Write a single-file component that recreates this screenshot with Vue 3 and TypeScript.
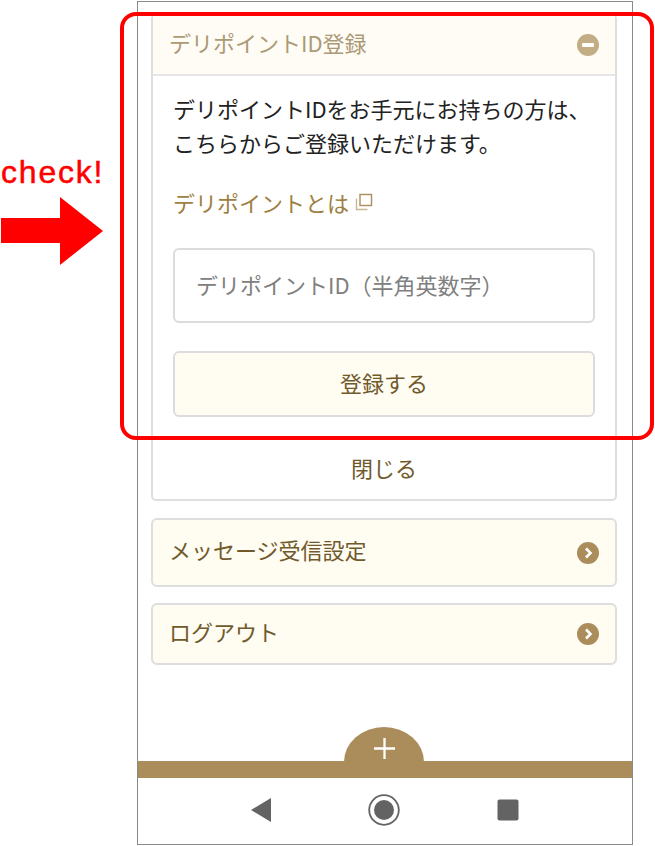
<script setup lang="ts">
const menuRows = ['メッセージ受信設定', 'ログアウト']
</script>

<template>
  <div class="page">
    <div class="phone">
      <main class="content">
        <section class="panel">
          <header class="panel-head">
            <span class="label">デリポイントID登録</span>
            <svg class="round-icon" viewBox="0 0 22 22">
              <circle cx="11" cy="11" r="11" fill="#c2ad84" />
              <rect x="5" y="9" width="12" height="4" rx="1" fill="#fff" />
            </svg>
          </header>
          <div class="panel-body">
            <p class="lead">デリポイントIDをお手元にお持ちの方は、<br />こちらからご登録いただけます。</p>
            <a class="link">
              デリポイントとは
              <svg class="window-icon" viewBox="0 0 18 18" fill="none" stroke="#a98d5c" stroke-width="1.4">
                <rect x="5" y="1.5" width="11.5" height="11" />
                <path d="M1.5 5.5v11h11" stroke="#c9b696" />
              </svg>
            </a>
            <input class="id-input" type="text" placeholder="デリポイントID（半角英数字）" />
            <button class="submit" type="button">登録する</button>
          </div>
          <div class="close">閉じる</div>
        </section>

        <a v-for="row in menuRows" :key="row" class="menu-row">
          <span class="label">{{ row }}</span>
          <svg class="round-icon" viewBox="0 0 22 22">
            <circle cx="11" cy="11" r="11" fill="#ab8d5b" />
            <path d="M9 6.5l4.5 4.5L9 15.5" fill="none" stroke="#fff" stroke-width="2.6" />
          </svg>
        </a>
      </main>

      <div class="tab-bar">
        <div class="tab-dome">
          <svg class="plus" viewBox="0 0 22 22" stroke="#fff" stroke-width="2.4">
            <path d="M11 0v22M0 11h22" />
          </svg>
        </div>
      </div>

      <nav class="system-nav">
        <svg class="nav-icon back" viewBox="0 0 20 24">
          <path d="M0 12L20 0v24z" fill="#636363" />
        </svg>
        <svg class="nav-icon home" viewBox="0 0 32 32">
          <circle cx="16" cy="16" r="14.8" fill="#fff" stroke="#636363" stroke-width="1.8" />
          <circle cx="16" cy="16" r="10" fill="#636363" />
        </svg>
        <svg class="nav-icon recent" viewBox="0 0 22 22">
          <rect x="0.5" y="0.5" width="21" height="21" rx="2" fill="#636363" />
        </svg>
      </nav>
    </div>

    <!-- annotation on top of the screenshot -->
    <div class="check-label">check!</div>
    <svg class="check-arrow" viewBox="0 0 103 70">
      <path d="M1 22h59V1l43 34-43 34V47H1z" fill="#f00" />
    </svg>
    <div class="check-frame"></div>
  </div>
</template>

<style>
body {
  background: #fff;
}
</style>

<style scoped>
.page {
  position: relative;
  width: 655px;
  height: 846px;
  overflow: hidden;
  font-family: "Noto Sans CJK JP", "Noto Sans", sans-serif;
  font-size: 22px;
  background: #fff;
}
.phone {
  box-sizing: border-box;
  display: flex;
  flex-direction: column;
  width: 496px;
  height: 844px;
  margin-left: 137px;
  position: relative;
  top: 1px;
  border: 1px solid #8a8a8a;
}
.content {
  flex: 1;
  display: flex;
  flex-direction: column;
  gap: 16px;
  padding: 12px 15px 0 13px;
}
.panel {
  box-sizing: border-box;
  height: 487px;
  margin-bottom: 1px;
  border: 2px solid #dedede;
  border-radius: 5px;
  background: #fff;
}
.panel-head {
  box-sizing: border-box;
  display: flex;
  align-items: center;
  justify-content: space-between;
  height: 60px;
  padding: 0 16px;
  background: #fffcf5;
  border-bottom: 2px solid #e6e6e6;
  color: #ab9a75;
}
.label {
  padding-bottom: 7px;
}
.round-icon {
  width: 22px;
  height: 22px;
  flex: none;
}
.panel-body {
  display: flex;
  flex-direction: column;
  padding: 15px 20px 0;
}
.lead {
  margin: 0;
  line-height: 34px;
  color: #222;
}
.link {
  display: flex;
  align-items: center;
  gap: 6px;
  margin-top: 26px;
  line-height: 34px;
  color: #a07f45;
}
.window-icon {
  width: 18px;
  height: 18px;
}
.id-input {
  box-sizing: border-box;
  width: 422px;
  height: 75px;
  margin-top: 29px;
  padding: 0 21px 4px;
  border: 2px solid #dcdcdc;
  border-radius: 6px;
  outline: none;
  font: inherit;
}
.id-input::placeholder {
  color: #808080;
  opacity: 1;
}
.submit {
  box-sizing: border-box;
  width: 422px;
  height: 66px;
  margin-top: 28px;
  padding: 0 0 4px;
  border: 2px solid #dcdcdc;
  border-radius: 6px;
  background: #fffcf2;
  color: #705a2c;
  font: inherit;
}
.close {
  margin-top: 30px;
  text-align: center;
  line-height: 40px;
  color: #705a2c;
}
.menu-row {
  box-sizing: border-box;
  display: flex;
  align-items: center;
  justify-content: space-between;
  height: 69px;
  padding: 0 16px;
  border: 2px solid #dedede;
  border-radius: 6px;
  background: #fffcf2;
  color: #705a2c;
}
.menu-row:last-child {
  height: 62px;
}
.tab-bar {
  position: relative;
  height: 17px;
  background: #ab8d5b;
}
.tab-dome {
  position: absolute;
  left: 206px;
  bottom: 16px;
  box-sizing: border-box;
  display: flex;
  justify-content: center;
  align-items: center;
  width: 80px;
  height: 35px;
  padding-top: 7px;
  border-radius: 40px 40px 0 0 / 35px 35px 0 0;
  background: #ab8d5b;
}
.plus {
  width: 21px;
  height: 21px;
}
.system-nav {
  box-sizing: border-box;
  display: flex;
  align-items: center;
  justify-content: center;
  gap: 97px;
  height: 66px;
  padding-bottom: 2px;
}
.nav-icon.back {
  width: 20px;
  height: 24px;
}
.nav-icon.home {
  width: 32px;
  height: 32px;
}
.nav-icon.recent {
  width: 22px;
  height: 22px;
}
.check-label {
  position: absolute;
  left: 1px;
  top: 153px;
  font-family: "Liberation Sans", Arial, sans-serif;
  font-size: 32px;
  line-height: 38px;
  letter-spacing: 1.8px;
  -webkit-text-stroke: 0.5px #f00;
  color: #f00;
}
.check-arrow {
  position: absolute;
  left: 0;
  top: 196px;
  width: 103px;
  height: 70px;
}
.check-frame {
  position: absolute;
  left: 120px;
  top: 12px;
  box-sizing: border-box;
  width: 534px;
  height: 428px;
  border: 4px solid #f00;
  border-radius: 16px;
}
</style>
